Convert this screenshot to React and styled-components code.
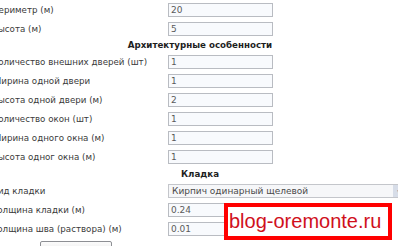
import React from 'react';
import styled, { createGlobalStyle } from 'styled-components';

const GlobalStyle = createGlobalStyle`
  html, body {
    margin: 0;
    padding: 0;
    background: #ffffff;
    overflow: hidden;
  }
  body {
    font-family: 'DejaVu Sans', Verdana, sans-serif;
  }
`;

const Page = styled.div`
  position: relative;
  width: 398px;
  height: 246px;
  overflow: hidden;
`;

const Form = styled.div`
  display: grid;
  grid-template-columns: 176px 1fr;
  width: 416px;
  margin-left: -8px;
  padding-top: 3px;
  row-gap: 5px;
`;

const Label = styled.div`
  display: flex;
  align-items: center;
  height: 14px;
  font-size: 8.7px;
  color: #3a3a3a;
  white-space: nowrap;
`;

const Heading = styled.div`
  grid-column: 1 / -1;
  height: ${(p) => p.h}px;
  line-height: ${(p) => p.h}px;
  text-align: center;
  font-size: 8.7px;
  font-weight: bold;
  color: #1e1e1e;
`;

const Field = styled.input`
  box-sizing: border-box;
  width: 105px;
  height: 14px;
  margin: 0;
  padding: 0 2px;
  border: 1px solid #b9bcc2;
  background: #f8fafd;
  font-family: 'DejaVu Sans', Verdana, sans-serif;
  font-size: 9px;
  color: #5a5a5a;
  outline: none;
`;

const SelectBox = styled.div`
  box-sizing: border-box;
  display: flex;
  align-items: stretch;
  width: 240px;
  height: 14px;
  border: 1px solid #c4c6cb;
  background: #f6f7f9;
`;

const SelectText = styled.div`
  flex: 1;
  padding-left: 3px;
  font-size: 9px;
  line-height: 12px;
  color: #4a4a4a;
  white-space: nowrap;
`;

const SelectArrow = styled.div`
  display: flex;
  align-items: center;
  justify-content: center;
  width: 13px;
  margin-right: 1px;
  background: #d7dde8;
  color: #6f7f9c;
  font-size: 6px;
`;

const ButtonRow = styled.div`
  grid-column: 1 / -1;
  padding-left: 48px;
  margin-top: -3px;
`;

const Button = styled.button`
  box-sizing: border-box;
  width: 72px;
  height: 18px;
  padding: 0;
  border: 1px solid #8d8f94;
  border-radius: 2px;
  background: linear-gradient(#fbfbfb, #e4e4e4);
  font-family: 'DejaVu Sans', Verdana, sans-serif;
  font-size: 8.7px;
  color: #333;
`;

const Watermark = styled.div`
  position: absolute;
  left: 224px;
  top: 203px;
  box-sizing: border-box;
  width: 168px;
  height: 37px;
  border: 4px solid #ff0000;
  background: #ffffff;
  padding-left: 1px;
  font-family: 'Liberation Sans', Arial, sans-serif;
  font-size: 20px;
  line-height: 28px;
  color: #d0101c;
  white-space: nowrap;
`;

const rows = [
  { label: 'Периметр (м)', value: '20' },
  { label: 'Высота (м)', value: '5' },
  { heading: 'Архитектурные особенности', h: 9 },
  { label: 'Количество внешних дверей (шт)', value: '1' },
  { label: 'Ширина одной двери', value: '1' },
  { label: 'Высота одной двери (м)', value: '2' },
  { label: 'Количество окон (шт)', value: '1' },
  { label: 'Ширина одного окна (м)', value: '1' },
  { label: 'Высота одног окна (м)', value: '1' },
  { heading: 'Кладка', h: 10 },
  { label: 'Вид кладки', select: 'Кирпич одинарный щелевой' },
  { label: 'Толщина кладки (м)', value: '0.24' },
  { label: 'Толщина шва (раствора) (м)', value: '0.01' },
];

export default function App() {
  return (
    <Page>
      <GlobalStyle />
      <Form>
        {rows.map((r, i) =>
          r.heading ? (
            <Heading key={i} h={r.h}>{r.heading}</Heading>
          ) : (
            <React.Fragment key={i}>
              <Label>{r.label}</Label>
              {r.select ? (
                <SelectBox>
                  <SelectText>{r.select}</SelectText>
                  <SelectArrow>▼</SelectArrow>
                </SelectBox>
              ) : (
                <Field type="text" defaultValue={r.value} />
              )}
            </React.Fragment>
          )
        )}
        <ButtonRow>
          <Button type="button">Рассчитать</Button>
        </ButtonRow>
      </Form>
      <Watermark>blog-oremonte.ru</Watermark>
    </Page>
  );
}
